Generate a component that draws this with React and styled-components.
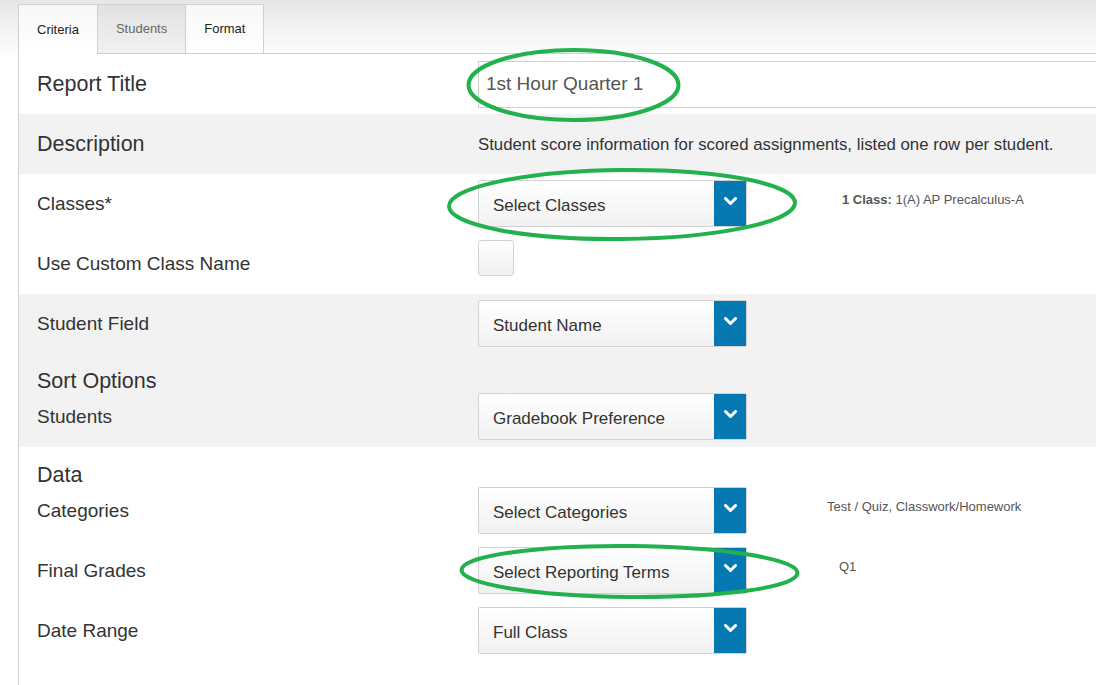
import styled, { createGlobalStyle } from "styled-components";

const GlobalStyle = createGlobalStyle`
  body {
    margin: 0;
    overflow: hidden;
    background: linear-gradient(#e6e6e6 0, #fbfbfb 50px, #fff 60px);
    font-family: "Liberation Sans", Arial, sans-serif;
    color: #333;
  }
`;

const Page = styled.div`
  position: relative;
  width: 1096px;
  height: 685px;
  padding: 4px 0 0 18px;
  box-sizing: border-box;
`;

const TabBar = styled.div`
  display: flex;
  height: 50px;
`;

const Tab = styled.div`
  display: flex;
  align-items: center;
  padding: 0 18px 1px;
  font-size: 13px;
  border-top: 1px solid #d0d0d0;
  border-right: 1px solid #d0d0d0;
  border-bottom: ${(p) => (p.$active ? "none" : "1px solid #d0d0d0")};
  border-left: ${(p) => (p.$first ? "1px solid #d0d0d0" : "none")};
  color: ${(p) => (p.$muted ? "#666" : "#222")};
  background: ${(p) =>
    p.$muted
      ? "linear-gradient(#e2e2e2, #f1f1f1)"
      : "linear-gradient(#f7f7f7, #fff)"};
`;

const TabFill = styled.div`
  flex: 1;
  border-bottom: 1px solid #d0d0d0;
`;

const Panel = styled.div`
  border-left: 1px solid #d0d0d0;
  height: 640px;
`;

const Section = styled.div`
  background: ${(p) => (p.$gray ? "#f2f2f2" : "#fff")};
`;

const Row = styled.div`
  display: grid;
  grid-template-columns: 441px 269px 1fr;
  align-items: ${(p) => (p.$top ? "start" : "center")};
  height: 60px;
  padding: 6px 0 7px 18px;
  box-sizing: border-box;
`;

const Label = styled.div`
  font-size: ${(p) => (p.$big ? "21.5px" : "19px")};
  line-height: 47px;
  padding-top: ${(p) => (p.$big ? "1px" : "0")};
  color: #333;
  white-space: nowrap;
`;

const Heading = styled.div`
  height: ${(p) => p.$h}px;
  padding: ${(p) => p.$pt}px 0 0 18px;
  box-sizing: border-box;
  font-size: 21.5px;
  line-height: 24px;
  color: #333;
`;

const TextInput = styled.div`
  grid-column: 2 / 4;
  height: 47px;
  margin-right: -40px;
  border: 1px solid #cfcfcf;
  border-right: none;
  box-sizing: border-box;
  padding-left: 7px;
  font-size: 19px;
  line-height: 44px;
  color: #555;
  background: #fff;
`;

const Desc = styled.div`
  grid-column: 2 / 4;
  font-size: 16.8px;
  padding-top: 1px;
  color: #333;
  white-space: nowrap;
`;

const Select = styled.div`
  display: flex;
  height: 47px;
  border: 1px solid #d2d2d2;
  border-radius: 2px;
  box-sizing: border-box;
  background: linear-gradient(#fff, #f1f1f1);
`;

const SelectText = styled.div`
  flex: 1;
  padding: 2px 0 0 14px;
  font-size: 17px;
  line-height: 45px;
  color: #333;
`;

const SelectButton = styled.div`
  width: 32px;
  background: #0679b3;
  display: flex;
  justify-content: center;
  padding-top: 16px;
  box-sizing: border-box;
`;

const Check = styled.div`
  width: 36px;
  height: 36px;
  border: 1px solid #d2d2d2;
  border-radius: 3px;
  box-sizing: border-box;
  background: linear-gradient(#fff, #f0f0f0);
`;

const Note = styled.div`
  padding: 12px 0 0 ${(p) => p.$indent}px;
  font-size: 13px;
  line-height: 16px;
  color: #555;
  white-space: nowrap;
  b {
    font-weight: bold;
  }
`;

const Marks = styled.svg`
  position: absolute;
  left: 0;
  top: 0;
  pointer-events: none;
`;

const Chevron = () => (
  <svg width="13" height="9" viewBox="0 0 13 9">
    <path
      d="M1.5 1.5 L6.5 6.5 L11.5 1.5"
      fill="none"
      stroke="#fff"
      strokeWidth="3"
      strokeLinecap="round"
      strokeLinejoin="round"
    />
  </svg>
);

const Dropdown = ({ text }) => (
  <Select>
    <SelectText>{text}</SelectText>
    <SelectButton>
      <Chevron />
    </SelectButton>
  </Select>
);

const App = () => {
  return (
    <Page>
      <GlobalStyle />
      <TabBar>
        <Tab $first $active>
          Criteria
        </Tab>
        <Tab $muted>Students</Tab>
        <Tab>Format</Tab>
        <TabFill />
      </TabBar>
      <Panel>
        <Section>
          <Row>
            <Label $big>Report Title</Label>
            <TextInput>1st Hour Quarter 1</TextInput>
          </Row>
        </Section>
        <Section $gray>
          <Row>
            <Label $big>Description</Label>
            <Desc>
              Student score information for scored assignments, listed one row
              per student.
            </Desc>
          </Row>
        </Section>
        <Section>
          <Row $top>
            <Label>Classes*</Label>
            <Dropdown text="Select Classes" />
            <Note $indent={95}>
              <b>1 Class:</b> 1(A) AP Precalculus-A
            </Note>
          </Row>
          <Row $top>
            <Label>Use Custom Class Name</Label>
            <Check />
          </Row>
        </Section>
        <Section $gray>
          <Row $top>
            <Label>Student Field</Label>
            <Dropdown text="Student Name" />
          </Row>
          <Heading $h={33} $pt={15}>
            Sort Options
          </Heading>
          <Row $top>
            <Label>Students</Label>
            <Dropdown text="Gradebook Preference" />
          </Row>
        </Section>
        <Section>
          <Heading $h={34} $pt={16}>
            Data
          </Heading>
          <Row $top>
            <Label>Categories</Label>
            <Dropdown text="Select Categories" />
            <Note $indent={80}>Test / Quiz, Classwork/Homework</Note>
          </Row>
          <Row $top>
            <Label>Final Grades</Label>
            <Dropdown text="Select Reporting Terms" />
            <Note $indent={92}>Q1</Note>
          </Row>
          <Row $top>
            <Label>Date Range</Label>
            <Dropdown text="Full Class" />
          </Row>
        </Section>
      </Panel>
      <Marks width="1096" height="685" viewBox="0 0 1096 685">
        <g fill="none" stroke="#22b14c" strokeWidth="4">
          <ellipse cx="573.5" cy="85" rx="105" ry="35" />
          <ellipse cx="622" cy="204.5" rx="173" ry="34.5" transform="rotate(-0.6 622 204.5)" />
          <ellipse cx="629.5" cy="571.5" rx="168" ry="25.5" transform="rotate(0.5 629.5 571.5)" />
        </g>
      </Marks>
    </Page>
  );
};

export default App;
